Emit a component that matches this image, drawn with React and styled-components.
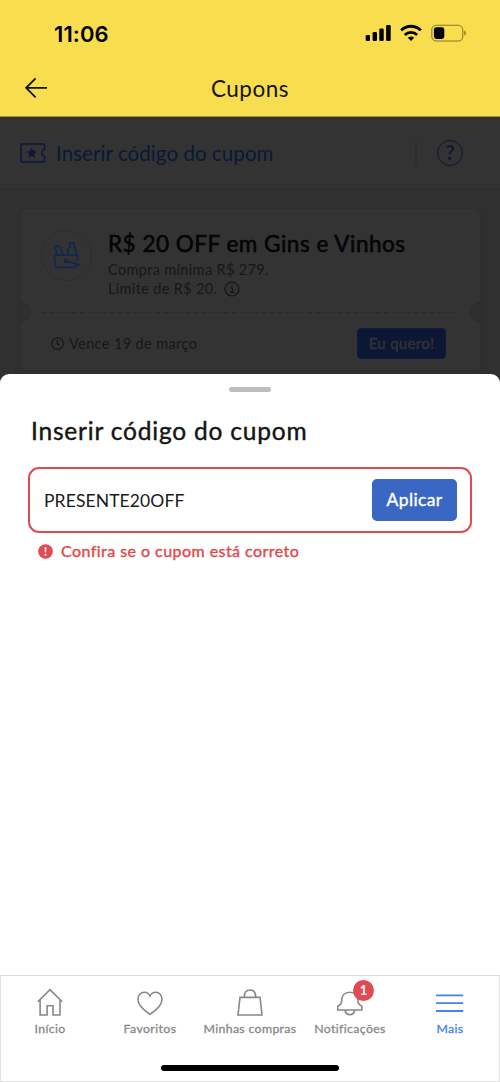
import React from 'react';
import styled, { createGlobalStyle } from 'styled-components';

const GlobalStyle = createGlobalStyle`
  * {
    box-sizing: border-box;
  }

  body {
    margin: 0;
    background: #fff;
    font-family: Lato, "Open Sans", sans-serif;
  }

  button, input {
    font-family: inherit;
  }

  svg {
    display: block;
    flex-shrink: 0;
  }
`;

const tabs = [
    { id: 'home', label: 'Início', spacing: 0.35 },
    { id: 'heart', label: 'Favoritos', spacing: 0.4 },
    { id: 'bag', label: 'Minhas compras', spacing: 0.34 },
    { id: 'bell', label: 'Notificações', spacing: 0.37, badge: 1 },
    { id: 'menu', label: 'Mais', spacing: 0.3, active: true },
];

const StatusIcons = () => (
    <svg width="102" height="20" viewBox="0 0 102 20">
        <rect x="0.7" y="11" width="4.3" height="6" rx="1.2" />
        <rect x="7.6" y="8" width="4.4" height="9" rx="1.2" />
        <rect x="14.3" y="4.6" width="4.4" height="12.4" rx="1.2" />
        <rect x="21.1" y="1" width="4.6" height="16" rx="1.2" />
        <g fill="none" stroke="#000" strokeWidth="2.8">
            <path d="M36.2 6.4a13.6 13.6 0 0 1 19.6 0" />
            <path d="M39.8 10.9a8.8 8.8 0 0 1 12.4 0" />
        </g>
        <path d="M46 17l-3.2-3.2a4.9 4.9 0 0 1 6.4 0z" />
        <rect x="66.8" y="1.2" width="31" height="15.8" rx="4.6" fill="none" stroke="#000" strokeOpacity="0.45" strokeWidth="1.1" />
        <rect x="68.9" y="3.3" width="10.4" height="11.6" rx="2.4" />
        <path d="M99.3 6.6c2 .8 2 4.2 0 5z" fillOpacity="0.5" />
    </svg>
);

const TicketIcon = () => (
    <svg width="26" height="20" viewBox="0 0 26 20">
        <path d="M2.2 1h21q1.4 0 1.4 1.4v3.7a3.9 3.9 0 0 0 0 7.4v4q0 1.4-1.4 1.4h-21Q1 18.9 1 17.5v-15Q1 1 2.2 1z" fill="none" stroke="#0b1838" strokeWidth="1.5" />
        <path d="M11.7 4.6l1.6 3.4 3.7.5-2.7 2.5.7 3.7-3.3-1.8-3.3 1.8.7-3.7-2.7-2.5 3.7-.5z" fill="#0b1838" />
    </svg>
);

const BasketIcon = () => (
    <svg width="28" height="27" viewBox="0 0 28 27" fill="none" stroke="#132750" strokeWidth="1.8">
        <path d="M1 13.2h24.2M1.2 13.2l1.7 12.2h19.7l.5-3M24.8 13.2l-.8 5.2" />
        <path d="M4.6 13L2.8 8.2C1.8 5.3 2.7 4 4.4 3.9c1.4 0 2.4.9 3 2.4l2.7 6.8" />
        <path d="M14.7 13V9c0-2.3 2.4-2.7 2.4-5V1.2h4V4c0 2.3 2.2 2.9 2.2 5v4" />
        <path d="M13 18.9l14 4.3" />
        <circle cx="13" cy="18.8" r="1.4" fill="#132750" />
    </svg>
);

const TabIcon = ({ id }) => (
    <svg width="30" height="30" viewBox="0 0 30 30" fill="none" stroke="currentColor" strokeWidth="1.6">
        {id === 'home' && <path d="M2.8 14.8L15 2.6l12.2 12.2M5.1 13v15h7v-9.2h5.9V28h7V13" />}
        {id === 'heart' && <path d="M15 27.3C9 23.5 3 18.3 3 12.3 3 8.2 5.8 5.3 9.2 5.3c2.4 0 4.7 1.4 5.8 3.8 1.1-2.4 3.4-3.8 5.8-3.8 3.4 0 6.2 2.9 6.2 7 0 6-6 11.2-12 15z" />}
        {id === 'bag' && <path d="M5 10.4h20L27 28H3zM9.3 10.2c0-4.7 2-7.2 5.7-7.2s5.7 2.5 5.7 7.2" />}
        {id === 'bell' && (
            <g>
                <path d="M2.8 23v-4c2.6-.9 3.8-2.2 3.8-5.2 0-5.4 3.2-8.6 8.2-8.6s8.2 3.2 8.2 8.6c0 3 1.2 4.3 3.8 5.2v4z" />
                <path d="M9.9 23c.5 3 2.2 4.6 4.9 4.6s4.4-1.6 4.9-4.6" />
            </g>
        )}
        {id === 'menu' && <path d="M1 8.4h27.2M1 16.1h27.2M1 24h27.2" strokeWidth="1.8" />}
    </svg>
);

const App = () => {
    const [code, setCode] = React.useState('PRESENTE20OFF');

    return (
        <Screen>
            <GlobalStyle />
            <Header>
                <StatusBar>
                    <Time>11:06</Time>
                    <StatusIcons />
                </StatusBar>
                <TitleBar>
                    <BackButton aria-label="Voltar">
                        <svg width="24" height="22" viewBox="0 0 24 22" fill="none" stroke="#111" strokeWidth="1.8">
                            <path d="M2 10.8H23M11.6 1.3L2.1 10.8l9.5 9.5" />
                        </svg>
                    </BackButton>
                    <Title>Cupons</Title>
                </TitleBar>
            </Header>

            <Backdrop>
                <CodeBar>
                    <TicketIcon />
                    <CodeLabel>Inserir código do cupom</CodeLabel>
                    <Separator />
                    <Help>?</Help>
                </CodeBar>
                <Coupon>
                    <CouponTop>
                        <Avatar><BasketIcon /></Avatar>
                        <CouponInfo>
                            <CouponTitle>R$ 20 OFF em Gins e Vinhos</CouponTitle>
                            <CouponText>Compra mínima R$ 279.</CouponText>
                            <CouponText>
                                Limite de R$ 20.
                                <svg width="16" height="16" viewBox="0 0 16 16" fill="none" stroke="#141414" strokeWidth="1.2">
                                    <circle cx="8" cy="8" r="7" />
                                    <path d="M6.3 6.9h2v4.3M6 11.4h4.4M7.4 4.4h1.4" />
                                </svg>
                            </CouponText>
                        </CouponInfo>
                    </CouponTop>
                    <Perforation>
                        <Notch />
                        <Dashes />
                        <Notch $right />
                    </Perforation>
                    <CouponBottom>
                        <svg width="13" height="13" viewBox="0 0 13 13" fill="none" stroke="#141414" strokeWidth="1.1">
                            <circle cx="6.5" cy="6.5" r="5.8" />
                            <path d="M6.3 3v4l2.4 1.2" />
                        </svg>
                        <Expires>Vence 19 de março</Expires>
                        <WantButton>Eu quero!</WantButton>
                    </CouponBottom>
                </Coupon>
            </Backdrop>

            <Sheet>
                <Handle />
                <SheetTitle>Inserir código do cupom</SheetTitle>
                <Field>
                    <Input value={code} onChange={(e) => setCode(e.target.value)} />
                    <ApplyButton>Aplicar</ApplyButton>
                </Field>
                <ErrorRow>
                    <svg width="15" height="15" viewBox="0 0 15 15">
                        <circle cx="7.5" cy="7.5" r="7.3" fill="#e04a52" />
                        <path d="M6.6 3.3h1.8l-.3 5.2H6.9z" fill="#fff" />
                        <circle cx="7.5" cy="10.7" r="1" fill="#fff" />
                    </svg>
                    <ErrorText>Confira se o cupom está correto</ErrorText>
                </ErrorRow>
            </Sheet>

            <TabBar>
                <Tabs>
                    {tabs.map((tab) => (
                        <Tab key={tab.id} $active={tab.active}>
                            <TabIcon id={tab.id} />
                            <TabLabel $spacing={tab.spacing}>{tab.label}</TabLabel>
                            {tab.badge && <Badge>{tab.badge}</Badge>}
                        </Tab>
                    ))}
                </Tabs>
                <HomeIndicator />
            </TabBar>
        </Screen>
    );
};

const Screen = styled.div`
  width: 500px;
  height: 1082px;
  display: flex;
  flex-direction: column;
  overflow: hidden;
  background: #303030;
  white-space: nowrap;
`;

const Header = styled.header`
  height: 117px;
  flex-shrink: 0;
  background: #f8de4e;
  border-bottom: 1px solid #a29235;
`;

const StatusBar = styled.div`
  height: 62px;
  display: flex;
  align-items: center;
  justify-content: space-between;
  padding: 6px 33px 0 54px;
`;

const Time = styled.span`
  margin-top: -1px;
  font-family: Inter, sans-serif;
  font-size: 22px;
  font-weight: 600;
  letter-spacing: 0.1px;
  color: #000;
`;

const TitleBar = styled.div`
  height: 54px;
  display: grid;
  grid-template-columns: 64px 1fr 64px;
  align-items: center;
`;

const BackButton = styled.button`
  padding: 0 0 3px 24px;
  border: 0;
  background: none;
`;

const Title = styled.h1`
  margin: -2px 0 0;
  text-align: center;
  font-size: 22.5px;
  font-weight: 400;
  letter-spacing: 0.5px;
  color: #161406;
`;

const Backdrop = styled.div`
  height: 257px;
  flex-shrink: 0;
`;

const CodeBar = styled.div`
  height: 72px;
  display: flex;
  align-items: center;
  padding: 0 37px 0 20px;
  background: #333;
  border-bottom: 1px solid #2d2d2d;
`;

const CodeLabel = styled.span`
  flex: 1;
  margin-left: 10px;
  font-size: 20.5px;
  letter-spacing: 0.07px;
  color: #0b1838;
`;

const Separator = styled.div`
  width: 2px;
  height: 26px;
  margin-right: 20px;
  background: #2e2e2e;
`;

const Help = styled.div`
  width: 26px;
  height: 26px;
  border: 1.5px solid #0b1838;
  border-radius: 50%;
  font-size: 20px;
  font-weight: 700;
  line-height: 22px;
  text-align: center;
  color: #0b1838;
`;

const Coupon = styled.div`
  width: 459px;
  height: 161px;
  margin: 20px 0 0 21px;
  border-radius: 6px;
  background: #333;
  box-shadow: 0 0 3px #2d2d2d;
`;

const CouponTop = styled.div`
  height: 92px;
  display: flex;
  padding: 21px 0 0 20px;
`;

const Avatar = styled.div`
  width: 51px;
  height: 51px;
  display: flex;
  align-items: center;
  justify-content: center;
  border: 1px solid #2d2d2d;
  border-radius: 50%;
`;

const CouponInfo = styled.div`
  padding: 1px 0 0 16px;
`;

const CouponTitle = styled.h2`
  margin: 0 0 3px;
  font-size: 22.5px;
  font-weight: 400;
  line-height: 26px;
  letter-spacing: 0.5px;
  color: #050505;
  -webkit-text-stroke: 0.6px #050505;
`;

const CouponText = styled.div`
  display: flex;
  align-items: center;
  gap: 7px;
  font-size: 14.5px;
  line-height: 19px;
  letter-spacing: 0.34px;
  color: #171717;
`;

const Perforation = styled.div`
  height: 22px;
  display: flex;
  align-items: center;
  justify-content: space-between;
`;

const Notch = styled.div`
  width: 10px;
  height: 20px;
  background: #303030;
  border: 1px solid #2c2c2c;
  ${({ $right }) => ($right
        ? 'border-right: 0; border-radius: 10px 0 0 10px;'
        : 'border-left: 0; border-radius: 0 10px 10px 0;')}
`;

const Dashes = styled.div`
  width: 418px;
  height: 1px;
  background: repeating-linear-gradient(90deg, #2a2a2a 0 4px, transparent 4px 7.6px);
`;

const CouponBottom = styled.div`
  height: 41px;
  display: flex;
  align-items: center;
  padding: 0 34px 0 30px;
`;

const Expires = styled.span`
  flex: 1;
  margin: -1px 0 0 5px;
  font-size: 14.5px;
  letter-spacing: 0.38px;
  color: #171717;
`;

const WantButton = styled.button`
  width: 89px;
  height: 31px;
  padding: 0 0 1px;
  border: 1px solid #0d1d42;
  border-radius: 4px;
  background: #0b1733;
  color: #333;
  font-size: 15px;
  font-weight: 400;
  letter-spacing: 0.3px;
  -webkit-text-stroke: 0.4px #333;
`;

const Sheet = styled.section`
  flex: 1;
  display: flex;
  flex-direction: column;
  border-radius: 9px 9px 0 0;
  background: #fff;
`;

const Handle = styled.div`
  width: 42px;
  height: 5px;
  margin: 13px auto 0;
  border-radius: 3px;
  background: #bdbdbd;
`;

const SheetTitle = styled.h2`
  margin: 24px 0 0 31px;
  font-size: 24.5px;
  font-weight: 400;
  line-height: 29px;
  letter-spacing: 0.8px;
  color: #141414;
  -webkit-text-stroke: 0.4px #141414;
`;

const Field = styled.div`
  width: 444px;
  height: 66px;
  display: flex;
  align-items: center;
  margin: 22px 0 0 28px;
  padding: 0 13px 0 14px;
  border: 2.5px solid #e04a52;
  border-radius: 11px;
`;

const Input = styled.input`
  flex: 1;
  min-width: 0;
  padding: 0;
  border: 0;
  outline: 0;
  background: none;
  font-size: 17.5px;
  letter-spacing: 0.1px;
  color: #1a1a1a;
`;

const ApplyButton = styled.button`
  width: 85px;
  height: 42px;
  margin-top: -1px;
  padding: 0;
  border: 0;
  border-radius: 5px;
  background: #3a66c4;
  color: #fff;
  font-size: 17.5px;
  font-weight: 400;
  letter-spacing: 0.35px;
  -webkit-text-stroke: 0.4px #fff;
`;

const ErrorRow = styled.div`
  display: flex;
  align-items: center;
  margin: 8px 0 0 38px;
`;

const ErrorText = styled.span`
  margin-left: 8px;
  font-size: 16px;
  font-weight: 400;
  line-height: 20px;
  letter-spacing: 0.45px;
  color: #e04a4a;
  -webkit-text-stroke: 0.4px #e04a4a;
`;

const TabBar = styled.nav`
  height: 107px;
  flex-shrink: 0;
  background: #fff;
  border: 1px solid #e2e2e2;
  border-top: 1.5px solid #dcdcdc;
`;

const Tabs = styled.div`
  display: grid;
  grid-template-columns: repeat(5, 100px);
  margin: 0 -1px;
  height: 89px;
`;

const Tab = styled.div`
  position: relative;
  display: flex;
  flex-direction: column;
  align-items: center;
  padding-top: 11px;
  color: ${({ $active }) => ($active ? '#4780f5' : '#888')};
`;

const TabLabel = styled.span`
  margin-top: 4px;
  font-size: 12.3px;
  line-height: 16px;
  letter-spacing: ${({ $spacing }) => $spacing}px;
  -webkit-text-stroke: 0.3px currentColor;
`;

const Badge = styled.span`
  position: absolute;
  top: 4px;
  left: 53px;
  width: 21px;
  height: 21px;
  border-radius: 50%;
  background: #e04a52;
  color: #fff;
  font-size: 13px;
  font-weight: 700;
  line-height: 20px;
  text-align: center;
`;

const HomeIndicator = styled.div`
  width: 178px;
  height: 6px;
  margin: 0 auto;
  border-radius: 4px;
  background: #000;
`;

export default App;
